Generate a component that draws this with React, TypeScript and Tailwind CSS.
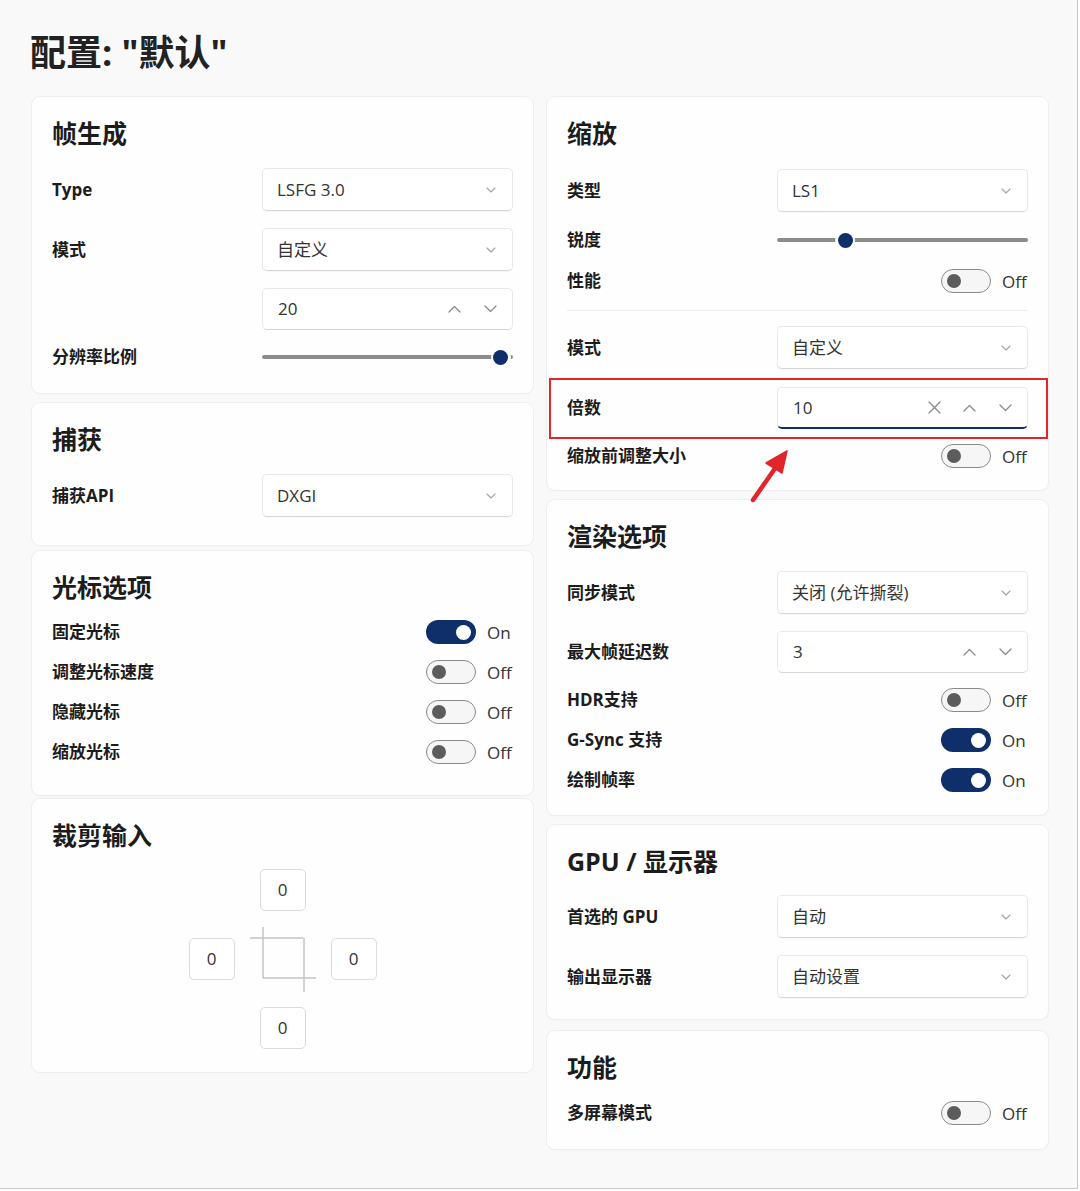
import React from "react";

const NAVY = "bg-[#0f2f6b]";

function ChevronDown({ className = "" }: { className?: string }) {
  return (
    <svg width="10" height="6" viewBox="0 0 10 6" className={className}>
      <path d="M1 1 L5 5 L9 1" fill="none" stroke="currentColor" strokeWidth="1.1" strokeLinecap="round" strokeLinejoin="round" />
    </svg>
  );
}

function ChevronUp({ className = "" }: { className?: string }) {
  return (
    <svg width="13" height="8" viewBox="0 0 13 8" className={className}>
      <path d="M1 7 L6.5 1.5 L12 7" fill="none" stroke="currentColor" strokeWidth="1.3" strokeLinecap="round" strokeLinejoin="round" />
    </svg>
  );
}

function ChevronDownBig({ className = "" }: { className?: string }) {
  return (
    <svg width="13" height="8" viewBox="0 0 13 8" className={className}>
      <path d="M1 1 L6.5 6.5 L12 1" fill="none" stroke="currentColor" strokeWidth="1.3" strokeLinecap="round" strokeLinejoin="round" />
    </svg>
  );
}

function XIcon() {
  return (
    <svg width="13" height="13" viewBox="0 0 13 13" className="text-[#8a8a8a]">
      <path d="M1 1 L12 12 M12 1 L1 12" fill="none" stroke="currentColor" strokeWidth="1.3" strokeLinecap="round" />
    </svg>
  );
}

function Dropdown({ value }: { value: string }) {
  return (
    <div className="h-[43px] bg-white border border-[#e8e8e8] border-b-[#d6d6d6] rounded-[5px] shadow-[0_1px_1px_rgba(0,0,0,0.03)] flex items-center justify-between pl-[14px] pr-[16px] text-[17px] text-[#333]">
      <span>{value}</span>
      <ChevronDown className="text-[#a3a3a3]" />
    </div>
  );
}

function NumberBox({ value, clear = false, focused = false }: { value: string; clear?: boolean; focused?: boolean }) {
  return (
    <div
      className={
        "h-[42px] bg-white border border-[#e8e8e8] rounded-[5px] flex items-center pl-[15px] pr-[15px] text-[17px] text-[#333] " +
        (focused ? "border-b-2 border-b-[#0f2f6b]" : "border-b-[#d6d6d6]")
      }
    >
      <span className="flex-1">{value}</span>
      {clear && (
        <span className="w-[13px] mr-[22px] flex justify-center">
          <XIcon />
        </span>
      )}
      <span className="w-[13px] mr-[23px] flex justify-center text-[#8a8a8a]">
        <ChevronUp />
      </span>
      <span className="w-[13px] flex justify-center text-[#8a8a8a]">
        <ChevronDownBig />
      </span>
    </div>
  );
}

function Toggle({ on }: { on: boolean }) {
  return (
    <div className="flex items-center gap-[11px]">
      {on ? (
        <div className={`w-[50px] h-[24px] rounded-full ${NAVY} flex items-center justify-end pr-[5px]`}>
          <div className="w-[15px] h-[15px] rounded-full bg-white" />
        </div>
      ) : (
        <div className="w-[50px] h-[24px] rounded-full border-[1.5px] border-[#8a8a8a] bg-[#f6f6f6] flex items-center pl-[5px]">
          <div className="w-[14px] h-[14px] rounded-full bg-[#5c5c5c]" />
        </div>
      )}
      <span className="w-[26px] text-[17px] text-[#333] leading-none">{on ? "On" : "Off"}</span>
    </div>
  );
}

function Slider({ pct }: { pct: number }) {
  return (
    <div className="relative h-[20px] flex items-center">
      <div className="w-full h-[4px] rounded-full bg-[#8c8c8c]" />
      <div
        className="absolute top-1/2 -translate-y-1/2 -translate-x-1/2 w-[20px] h-[20px] rounded-full bg-white flex items-center justify-center"
        style={{ left: `${pct}%` }}
      >
        <div className={`w-[15px] h-[15px] rounded-full ${NAVY}`} />
      </div>
    </div>
  );
}

function Label({ children }: { children: React.ReactNode }) {
  return <div className="w-[210px] shrink-0 font-bold text-[17px] text-[#1c1c1c]">{children}</div>;
}

function Row({ label, children, h, mt }: { label: string; children: React.ReactNode; h: string; mt: string }) {
  return (
    <div className={`flex items-center ${h} ${mt}`}>
      <Label>{label}</Label>
      <div className="flex-1">{children}</div>
    </div>
  );
}

function ToggleRow({ label, on, h = "h-[40px]", mt = "" }: { label: string; on: boolean; h?: string; mt?: string }) {
  return (
    <div className={`flex items-center justify-between ${h} ${mt}`}>
      <div className="font-bold text-[17px] text-[#1c1c1c]">{label}</div>
      <Toggle on={on} />
    </div>
  );
}

function Card({ children, className = "" }: { children: React.ReactNode; className?: string }) {
  return (
    <div className={"bg-[#fefefe] rounded-[8px] shadow-[0_0_0_1px_#eeeeee,0_1px_3px_rgba(0,0,0,0.03)] px-[20px] pt-[20px] " + className}>
      {children}
    </div>
  );
}

function Heading({ children }: { children: React.ReactNode }) {
  return <div className="h-[32px] leading-[32px] text-[25px] font-bold text-[#1c1c1c]">{children}</div>;
}

function CropBox() {
  return (
    <div className="w-[46px] h-[42px] bg-white border border-[#dcdcdc] rounded-[5px] flex items-center justify-center text-[17px] text-[#333]">
      0
    </div>
  );
}

function CropIcon() {
  return (
    <div className="relative w-[46px] h-[42px]">
      <svg
        width="66"
        height="66"
        viewBox="0 0 66 66"
        className="absolute left-1/2 top-1/2 -translate-x-1/2 -translate-y-1/2"
      >
        <path d="M13 1 V52 M0 12 H53 M54 12 V66 M13 52 H66" fill="none" stroke="#c4c4c4" strokeWidth="1.5" />
      </svg>
    </div>
  );
}

export default function App() {
  return (
    <div className="w-[1080px] h-[1191px] bg-white [font-family:'Open_Sans','Noto_Sans_CJK_SC',sans-serif]">
      <div className="relative w-[1078px] h-[1189px] bg-[#f9f9f9] border-r border-b border-[#c9c9c9] pl-[32px] pt-[33px]">
        <div className="-ml-[2px] h-[40px] leading-[40px] text-[36px] font-bold text-[#222]">配置: "默认"</div>

        <div className="mt-[24px] flex gap-[14px]">
          {/* Left column */}
          <div className="w-[501px] flex flex-col">
            <Card className="pb-[26px]">
              <Heading>帧生成</Heading>
              <Row label="Type" h="h-[43px]" mt="mt-[19px]">
                <Dropdown value="LSFG 3.0" />
              </Row>
              <Row label="模式" h="h-[43px]" mt="mt-[17px]">
                <Dropdown value="自定义" />
              </Row>
              <Row label="" h="h-[42px]" mt="mt-[17px]">
                <NumberBox value="20" />
              </Row>
              <Row label="分辨率比例" h="h-[20px]" mt="mt-[17px]">
                <Slider pct={95.2} />
              </Row>
            </Card>

            <Card className="mt-[10px] pb-[28px]">
              <Heading>捕获</Heading>
              <Row label="捕获API" h="h-[43px]" mt="mt-[19px]">
                <Dropdown value="DXGI" />
              </Row>
            </Card>

            <Card className="mt-[6px] pb-[23px]">
              <Heading>光标选项</Heading>
              <div className="mt-[9px]">
                <ToggleRow label="固定光标" on={true} />
                <ToggleRow label="调整光标速度" on={false} />
                <ToggleRow label="隐藏光标" on={false} />
                <ToggleRow label="缩放光标" on={false} />
              </div>
            </Card>

            <Card className="mt-[4px] pb-[23px]">
              <Heading>裁剪输入</Heading>
              <div className="mt-[18px] flex justify-center">
                <div className="grid grid-cols-[46px_46px_46px] grid-rows-[42px_42px_42px] gap-x-[25px] gap-y-[27px]">
                  <div />
                  <CropBox />
                  <div />
                  <CropBox />
                  <CropIcon />
                  <CropBox />
                  <div />
                  <CropBox />
                  <div />
                </div>
              </div>
            </Card>
          </div>

          {/* Right column */}
          <div className="w-[501px] flex flex-col">
            <Card className="pb-[22px]">
              <Heading>缩放</Heading>
              <Row label="类型" h="h-[43px]" mt="mt-[20px]">
                <Dropdown value="LS1" />
              </Row>
              <Row label="锐度" h="h-[20px]" mt="mt-[18px]">
                <Slider pct={27.2} />
              </Row>
              <ToggleRow label="性能" on={false} h="h-[24px]" mt="mt-[19px]" />
              <div className="mt-[17px] h-px bg-[#ececec]" />
              <Row label="模式" h="h-[43px]" mt="mt-[15px]">
                <Dropdown value="自定义" />
              </Row>
              <div className="relative flex items-center h-[42px] mt-[18px]">
                <Label>倍数</Label>
                <div className="flex-1">
                  <NumberBox value="10" clear focused />
                </div>
                <div className="absolute -left-[18px] -top-[9px] -right-[20px] -bottom-[10px] border-2 border-[#e0252b]" />
              </div>
              <ToggleRow label="缩放前调整大小" on={false} h="h-[24px]" mt="mt-[15px]" />
            </Card>

            <Card className="mt-[10px] pb-[15px]">
              <Heading>渲染选项</Heading>
              <Row label="同步模式" h="h-[43px]" mt="mt-[19px]">
                <Dropdown value="关闭 (允许撕裂)" />
              </Row>
              <Row label="最大帧延迟数" h="h-[42px]" mt="mt-[17px]">
                <NumberBox value="3" />
              </Row>
              <div className="mt-[7px]">
                <ToggleRow label="HDR支持" on={false} />
                <ToggleRow label="G-Sync 支持" on={true} />
                <ToggleRow label="绘制帧率" on={true} />
              </div>
            </Card>

            <Card className="mt-[10px] pb-[21px]">
              <Heading>GPU / 显示器</Heading>
              <Row label="首选的 GPU" h="h-[43px]" mt="mt-[18px]">
                <Dropdown value="自动" />
              </Row>
              <Row label="输出显示器" h="h-[43px]" mt="mt-[17px]">
                <Dropdown value="自动设置" />
              </Row>
            </Card>

            <Card className="mt-[12px] pb-[16px]">
              <Heading>功能</Heading>
              <ToggleRow label="多屏幕模式" on={false} mt="mt-[10px]" />
            </Card>
          </div>
        </div>

        {/* annotation arrow */}
        <svg width="50" height="60" viewBox="0 0 50 60" className="absolute left-[745px] top-[445px]">
          <path d="M8 55 L31 22" stroke="#e0252b" strokeWidth="4.5" strokeLinecap="round" fill="none" />
          <path d="M42 6 L21 18 L37 28 Z" fill="#e0252b" stroke="#e0252b" strokeWidth="1.5" strokeLinejoin="round" />
        </svg>
      </div>
    </div>
  );
}
